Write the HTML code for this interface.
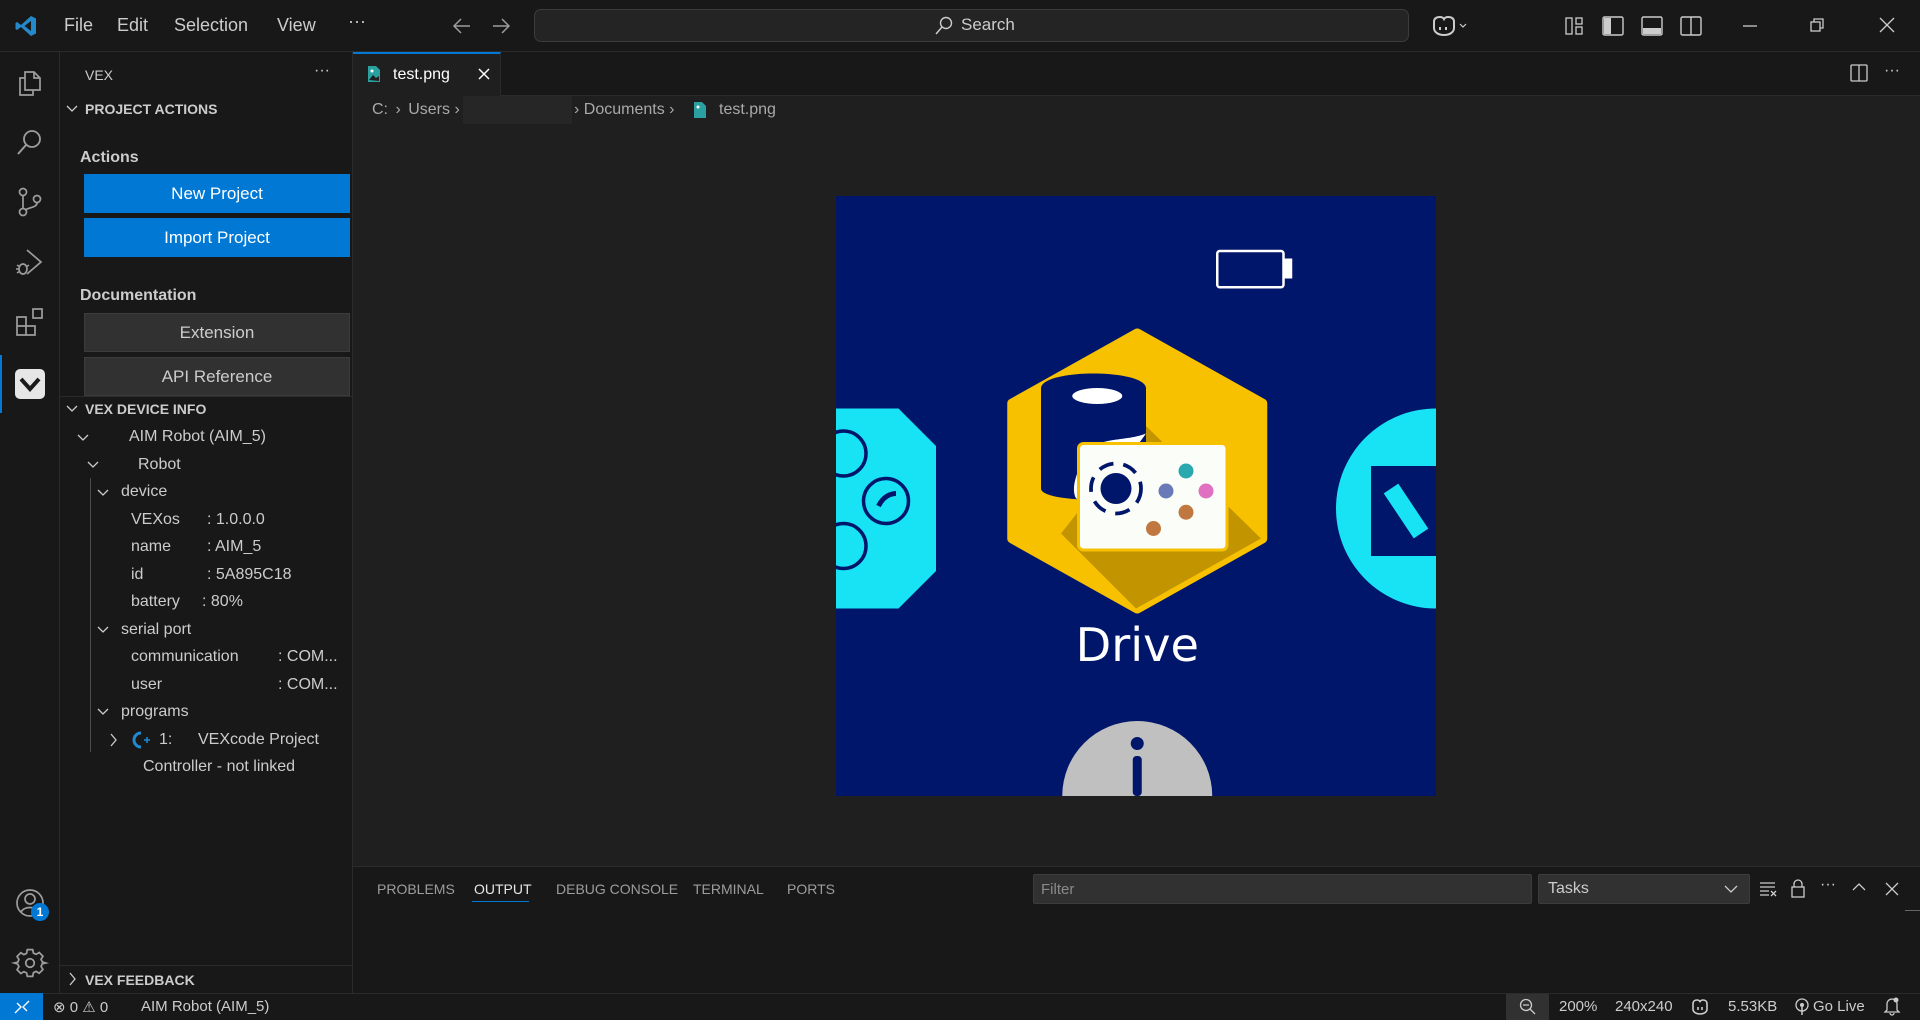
<!DOCTYPE html>
<html><head><meta charset="utf-8"><style>
*{box-sizing:border-box;margin:0;padding:0}
body{width:1920px;height:1020px;overflow:hidden;background:#1f1f1f;font-family:"Liberation Sans",sans-serif;color:#cccccc;position:relative}
.a{position:absolute}
.t{position:absolute;white-space:nowrap;font-size:16px}
svg{position:absolute;overflow:visible}
svg.img{overflow:hidden}
</style></head><body>
<!-- title bar -->
<div class="a" style="left:0;top:0;width:1920px;height:52px;background:#181818;border-bottom:1px solid #2b2b2b"></div>
<svg style="left:14px;top:14px" width="24" height="24" viewBox="0 0 24 24"><path d="M17 2 L22 4.5 V19.5 L17 22 L7 13 L3 16 L1.5 15 V9 L3 8 L7 11 Z M17 7 L10.5 12 L17 17 Z" fill="#2489ca" fill-rule="evenodd"/></svg>
<div class="t" style="left:64px;top:15px;font-size:18px">File</div>
<div class="t" style="left:117px;top:15px;font-size:18px">Edit</div>
<div class="t" style="left:174px;top:15px;font-size:18px">Selection</div>
<div class="t" style="left:277px;top:15px;font-size:18px">View</div>
<div class="t" style="left:348px;top:11px;font-size:18px">···</div>
<svg style="left:452px;top:17px" width="20" height="18"><path d="M18 9H2M9 2L2 9l7 7" stroke="#9d9d9d" stroke-width="1.5" fill="none"/></svg>
<svg style="left:491px;top:17px" width="20" height="18"><path d="M2 9h16M11 2l7 7-7 7" stroke="#9d9d9d" stroke-width="1.5" fill="none"/></svg>
<div class="a" style="left:534px;top:9px;width:875px;height:33px;background:#242424;border:1px solid #3c3c3c;border-radius:7px"></div>
<svg style="left:934px;top:16px" width="20" height="20"><circle cx="12" cy="7" r="5.5" stroke="#ccc" stroke-width="1.4" fill="none"/><path d="M8 11L2 18" stroke="#ccc" stroke-width="1.5"/></svg>
<div class="t" style="left:961px;top:15px;font-size:17px">Search</div>
<svg style="left:1430px;top:14px" width="40" height="24"><path d="M4 8c0-4 3-5 6-5s4 2 4 2 1-2 4-2 6 1 6 5v6c0 4-4 7-10 7S4 18 4 14z" stroke="#ccc" stroke-width="2" fill="none"/><path d="M10 13v3M16 13v3" stroke="#ccc" stroke-width="2"/><path d="M30 10l3 3 3-3" stroke="#ccc" stroke-width="1.2" fill="none"/></svg>
<svg style="left:1565px;top:16px" width="20" height="20"><rect x="1" y="2" width="6" height="16" stroke="#ccc" fill="none" stroke-width="1.3"/><rect x="11" y="2" width="6" height="6" stroke="#ccc" fill="none" stroke-width="1.3"/><rect x="11" y="11" width="6" height="7" stroke="#ccc" fill="none" stroke-width="1.3"/></svg>
<svg style="left:1602px;top:16px" width="22" height="20"><rect x="1" y="1" width="20" height="18" rx="1.5" stroke="#ccc" fill="none" stroke-width="1.4"/><rect x="2" y="2" width="7" height="16" fill="#ccc"/></svg>
<svg style="left:1641px;top:16px" width="22" height="20"><rect x="1" y="1" width="20" height="18" rx="1.5" stroke="#ccc" fill="none" stroke-width="1.4"/><rect x="2" y="12" width="18" height="6" fill="#ccc"/></svg>
<svg style="left:1680px;top:16px" width="22" height="20"><rect x="1" y="1" width="20" height="18" rx="1.5" stroke="#ccc" fill="none" stroke-width="1.4"/><path d="M11 1v18" stroke="#ccc" stroke-width="1.4"/></svg>
<svg style="left:1742px;top:24px" width="16" height="4"><path d="M1 2h14" stroke="#ccc" stroke-width="1.3"/></svg>
<svg style="left:1809px;top:17px" width="16" height="16"><rect x="2" y="5" width="9" height="9" stroke="#ccc" fill="none" stroke-width="1.3"/><path d="M5 5V2h9v9h-3" stroke="#ccc" fill="none" stroke-width="1.3"/></svg>
<svg style="left:1879px;top:17px" width="16" height="16"><path d="M1 1l14 14M15 1L1 15" stroke="#ccc" stroke-width="1.3"/></svg>

<!-- activity bar -->
<div class="a" style="left:0;top:52px;width:60px;height:941px;background:#181818;border-right:1px solid #2b2b2b"></div>
<svg style="left:15px;top:67px" width="30" height="30"><path d="M10 5h9l6 6v12H10z M19 5v6h6" stroke="#9d9d9d" fill="none" stroke-width="1.7"/><path d="M10 11H5v17h13v-5" stroke="#9d9d9d" fill="none" stroke-width="1.7"/></svg>
<svg style="left:15px;top:127px" width="30" height="30"><circle cx="17" cy="12" r="8" stroke="#9d9d9d" fill="none" stroke-width="1.8"/><path d="M11 18L3 27" stroke="#9d9d9d" stroke-width="2"/></svg>
<svg style="left:15px;top:187px" width="30" height="30"><circle cx="8" cy="5" r="3.5" stroke="#9d9d9d" fill="none" stroke-width="1.7"/><circle cx="8" cy="25" r="3.5" stroke="#9d9d9d" fill="none" stroke-width="1.7"/><circle cx="22" cy="12" r="3.5" stroke="#9d9d9d" fill="none" stroke-width="1.7"/><path d="M8 9v12M22 16c0 4-6 4-12 7" stroke="#9d9d9d" fill="none" stroke-width="1.7"/></svg>
<svg style="left:15px;top:247px" width="30" height="30"><path d="M12 3l14 12-14 12" stroke="#9d9d9d" fill="none" stroke-width="1.7"/><ellipse cx="8" cy="22" rx="4" ry="5" stroke="#9d9d9d" fill="none" stroke-width="1.7"/><path d="M2 18l3 2M2 26l3-2M14 18l-3 2M1 22h3" stroke="#9d9d9d" stroke-width="1.5"/></svg>
<svg style="left:15px;top:307px" width="30" height="30"><path d="M2 10h9v9h9v9H2z M2 19h9v9" stroke="#9d9d9d" fill="none" stroke-width="1.7"/><rect x="18" y="2" width="9" height="9" stroke="#9d9d9d" fill="none" stroke-width="1.7"/></svg>
<div class="a" style="left:0;top:355px;width:2px;height:58px;background:#0078d4"></div>
<div class="a" style="left:15px;top:369px;width:30px;height:30px;background:#e6e6e6;border-radius:5px"></div>
<svg style="left:15px;top:369px" width="30" height="30"><path d="M6 10l9 10 9-10" stroke="#1a1a1a" fill="none" stroke-width="4"/></svg>
<svg style="left:14px;top:887px" width="34" height="34"><circle cx="16" cy="16" r="13" stroke="#9d9d9d" fill="none" stroke-width="1.7"/><circle cx="16" cy="12" r="5" stroke="#9d9d9d" fill="none" stroke-width="1.7"/><path d="M7 25c3-6 15-6 18 0" stroke="#9d9d9d" fill="none" stroke-width="1.7"/></svg>
<div class="a" style="left:31px;top:903px;width:18px;height:18px;border-radius:9px;background:#0078d4;color:#fff;font-size:12px;text-align:center;line-height:18px;font-weight:bold">1</div>
<svg style="left:14px;top:947px" width="32" height="32" viewBox="0 0 24 24"><path d="M10 2h4l.6 2.6 2 .9 2.3-1.4 2.8 2.8-1.4 2.3.9 2L23.8 12v0l-2.6.6-.9 2 1.4 2.3-2.8 2.8-2.3-1.4-2 .9L14 22h-4l-.6-2.6-2-.9-2.3 1.4-2.8-2.8 1.4-2.3-.9-2L.2 12v0l2.6-.6.9-2-1.4-2.3 2.8-2.8 2.3 1.4 2-.9z" stroke="#9d9d9d" fill="none" stroke-width="1.3"/><circle cx="12" cy="12" r="3.2" stroke="#9d9d9d" fill="none" stroke-width="1.3"/></svg>

<!-- sidebar -->
<div class="a" style="left:60px;top:52px;width:293px;height:941px;background:#181818;border-right:1px solid #2b2b2b"></div>
<div class="t" style="left:85px;top:67px;font-size:14px">VEX</div>
<div class="t" style="left:314px;top:62px;font-size:16px">···</div>
<svg style="left:66px;top:104px" width="12" height="10"><path d="M1 2l5 5 5-5" stroke="#ccc" fill="none" stroke-width="1.3"/></svg>
<div class="t" style="left:85px;top:101px;font-size:14px;font-weight:bold">PROJECT ACTIONS</div>
<div class="t" style="left:80px;top:149px;font-size:16px;font-weight:bold">Actions</div>
<div class="a" style="left:84px;top:174px;width:266px;height:39px;background:#0078d4;color:#fff;font-size:17px;text-align:center;line-height:39px">New Project</div>
<div class="a" style="left:84px;top:218px;width:266px;height:39px;background:#0078d4;color:#fff;font-size:17px;text-align:center;line-height:39px">Import Project</div>
<div class="t" style="left:80px;top:287px;font-size:16px;font-weight:bold">Documentation</div>
<div class="a" style="left:84px;top:313px;width:266px;height:39px;background:#313131;border:1px solid #3c3c3c;font-size:17px;text-align:center;line-height:37px">Extension</div>
<div class="a" style="left:84px;top:357px;width:266px;height:39px;background:#313131;border:1px solid #3c3c3c;font-size:17px;text-align:center;line-height:37px">API Reference</div>
<div class="a" style="left:60px;top:396px;width:293px;height:1px;background:#2b2b2b"></div>
<svg style="left:66px;top:404px" width="12" height="10"><path d="M1 2l5 5 5-5" stroke="#ccc" fill="none" stroke-width="1.3"/></svg>
<div class="t" style="left:85px;top:401px;font-size:14px;font-weight:bold">VEX DEVICE INFO</div>
<svg style="left:77px;top:433px" width="12" height="10"><path d="M1 2l5 5 5-5" stroke="#ccc" fill="none" stroke-width="1.3"/></svg>
<div class="t" style="left:129px;top:428px">AIM Robot (AIM_5)</div>
<svg style="left:87px;top:460px" width="12" height="10"><path d="M1 2l5 5 5-5" stroke="#ccc" fill="none" stroke-width="1.3"/></svg>
<div class="t" style="left:138px;top:456px">Robot</div>
<div class="a" style="left:90px;top:478px;width:1px;height:274px;background:#4a4a4a"></div>
<svg style="left:97px;top:488px" width="12" height="10"><path d="M1 2l5 5 5-5" stroke="#ccc" fill="none" stroke-width="1.3"/></svg>
<div class="t" style="left:121px;top:483px">device</div>
<div class="t" style="left:131px;top:511px">VEXos</div><div class="t" style="left:207px;top:511px">: 1.0.0.0</div>
<div class="t" style="left:131px;top:538px">name</div><div class="t" style="left:207px;top:538px">: AIM_5</div>
<div class="t" style="left:131px;top:566px">id</div><div class="t" style="left:207px;top:566px">: 5A895C18</div>
<div class="t" style="left:131px;top:593px">battery</div><div class="t" style="left:202px;top:593px">: 80%</div>
<svg style="left:97px;top:625px" width="12" height="10"><path d="M1 2l5 5 5-5" stroke="#ccc" fill="none" stroke-width="1.3"/></svg>
<div class="t" style="left:121px;top:621px">serial port</div>
<div class="t" style="left:131px;top:648px">communication</div><div class="t" style="left:278px;top:648px">: COM...</div>
<div class="t" style="left:131px;top:676px">user</div><div class="t" style="left:278px;top:676px">: COM...</div>
<svg style="left:97px;top:707px" width="12" height="10"><path d="M1 2l5 5 5-5" stroke="#ccc" fill="none" stroke-width="1.3"/></svg>
<div class="t" style="left:121px;top:703px">programs</div>
<svg style="left:109px;top:733px" width="10" height="14"><path d="M2 1l5 6-5 6" stroke="#ccc" fill="none" stroke-width="1.3"/></svg>
<svg style="left:132px;top:731px" width="20" height="18"><path d="M9 2a7 7 0 1 0 0 14" stroke="#1f8ad2" fill="none" stroke-width="3"/><path d="M12 9h6M15 6v6" stroke="#1f8ad2" stroke-width="1.5"/></svg>
<div class="t" style="left:159px;top:731px">1:</div><div class="t" style="left:198px;top:731px">VEXcode Project</div>
<div class="t" style="left:143px;top:758px">Controller - not linked</div>
<div class="a" style="left:60px;top:965px;width:293px;height:1px;background:#2b2b2b"></div>
<svg style="left:68px;top:972px" width="10" height="14"><path d="M2 1l5 6-5 6" stroke="#ccc" fill="none" stroke-width="1.3"/></svg>
<div class="t" style="left:85px;top:972px;font-size:14px;font-weight:bold">VEX FEEDBACK</div>

<!-- tabs -->
<div class="a" style="left:353px;top:52px;width:1567px;height:44px;background:#181818;border-bottom:1px solid #2b2b2b"></div>
<div class="a" style="left:353px;top:52px;width:148px;height:45px;background:#1f1f1f;border-top:2px solid #0078d4;border-right:1px solid #2b2b2b"></div>
<svg style="left:367px;top:65px" width="14" height="18"><path d="M1 1h8l4 4v12H1z" fill="#2aa0a0"/><circle cx="5" cy="6" r="1.5" fill="#fff"/><path d="M2 15l4-5 3 3 3-2v5z" fill="#1f1f1f"/></svg>
<div class="t" style="left:393px;top:66px;font-size:16px;color:#fff">test.png</div>
<svg style="left:477px;top:67px" width="14" height="14"><path d="M2 2l10 10M12 2L2 12" stroke="#fff" stroke-width="1.5"/></svg>
<svg style="left:1850px;top:64px" width="18" height="18"><rect x="1" y="1" width="16" height="16" rx="1" stroke="#ccc" fill="none" stroke-width="1.3"/><path d="M9 1v16" stroke="#ccc" stroke-width="1.3"/></svg>
<div class="t" style="left:1884px;top:62px;font-size:16px">···</div>
<!-- breadcrumb -->
<div class="t" style="left:372px;top:101px;font-size:16px;color:#a9a9a9">C: <span style="margin:0 3px">›</span> Users <span>›</span></div>
<div class="a" style="left:463px;top:96px;width:109px;height:28px;background:#262626"></div>
<div class="t" style="left:574px;top:101px;font-size:16px;color:#a9a9a9">› Documents ›</div>
<svg style="left:693px;top:101px" width="14" height="18"><path d="M1 1h8l4 4v12H1z" fill="#2aa0a0"/><circle cx="5" cy="6" r="1.5" fill="#fff"/></svg>
<div class="t" style="left:719px;top:101px;font-size:16px;color:#a9a9a9">test.png</div>

<!-- image -->
<svg class="img" style="left:836px;top:196px" width="600" height="600" viewBox="0 0 240 240">
<rect width="240" height="240" fill="#00166b"/>
<rect x="152.5" y="22" width="26.5" height="14.5" rx="1" stroke="#fff" stroke-width="1" fill="none"/>
<path d="M179 25h3.5v8H179z" fill="#fff"/>
<path d="M0 85h25l15 15v50l-15 15H0z" fill="#17e3f4"/>
<g stroke="#00166b" stroke-width="1.4" fill="none"><circle cx="3" cy="103" r="9"/><circle cx="20" cy="122" r="9"/><circle cx="3" cy="140" r="9"/></g>
<path d="M17 124c2-4 5-5 7-5" stroke="#00166b" stroke-width="2" fill="none"/>
<circle cx="240" cy="125" r="40" fill="#17e3f4"/>
<path d="M214 108h26v36h-26z" fill="#00166b"/>
<path d="M222 117l12 18" stroke="#17e3f4" stroke-width="7"/>
<path d="M120.5 55l50 28v54l-50 28-50-28v-54z" fill="#f8c100" stroke="#f8c100" stroke-width="4" stroke-linejoin="round"/>
<path d="M124 92l46 45v0l-50 28-30-30z" fill="#c29500"/>
<path d="M82 77c0-8 42-8 42 0v40c0 6-42 6-42 0z" fill="#00166b"/>
<ellipse cx="104.5" cy="80" rx="10" ry="3.2" fill="#fff"/>
<path d="M124 95c-10 4-22 0-26 12-2 5-4 10-2 14l8 2z" fill="#fff"/>
<rect x="97" y="99" width="59.4" height="42.6" rx="2" fill="#fafdf8" stroke="#f8c100" stroke-width="1.2"/>
<circle cx="112" cy="117" r="6.2" fill="#00166b"/>
<circle cx="112" cy="117" r="10" stroke="#00166b" stroke-width="1.5" fill="none" stroke-dasharray="6 4"/>
<circle cx="140" cy="110" r="3" fill="#2aa8b0"/><circle cx="132" cy="118" r="3" fill="#6a7ab8"/><circle cx="148" cy="118" r="3" fill="#e070c0"/><circle cx="140" cy="126.5" r="3" fill="#c07840"/><circle cx="127" cy="133" r="3" fill="#c07840"/>
<text x="120.5" y="186" fill="#fff" font-family="DejaVu Sans,sans-serif" font-size="18.5" text-anchor="middle">Drive</text>
<circle cx="120.5" cy="240" r="30" fill="#c0c0c0"/>
<circle cx="120.5" cy="219" r="2.6" fill="#00166b"/>
<rect x="118.7" y="224" width="3.6" height="16" rx="1.5" fill="#00166b"/>
</svg>

<!-- panel -->
<div class="a" style="left:353px;top:866px;width:1567px;height:127px;background:#181818;border-top:1px solid #2b2b2b"></div>
<div class="t" style="left:377px;top:881px;font-size:14px;color:#9d9d9d">PROBLEMS</div>
<div class="t" style="left:474px;top:881px;font-size:14px;color:#e7e7e7">OUTPUT</div>
<div class="a" style="left:472px;top:901px;width:57px;height:1px;background:#0078d4"></div>
<div class="t" style="left:556px;top:881px;font-size:14px;color:#9d9d9d">DEBUG CONSOLE</div>
<div class="t" style="left:693px;top:881px;font-size:14px;color:#9d9d9d">TERMINAL</div>
<div class="t" style="left:787px;top:881px;font-size:14px;color:#9d9d9d">PORTS</div>
<div class="a" style="left:1033px;top:874px;width:499px;height:30px;background:#313131;border:1px solid #3c3c3c;border-radius:2px"></div>
<div class="t" style="left:1041px;top:881px;font-size:15px;color:#8a8a8a">Filter</div>
<div class="a" style="left:1538px;top:874px;width:212px;height:30px;background:#313131;border:1px solid #3c3c3c;border-radius:2px"></div>
<div class="t" style="left:1548px;top:880px;font-size:16px">Tasks</div>
<svg style="left:1724px;top:884px" width="14" height="10"><path d="M1 2l6 6 6-6" stroke="#ccc" fill="none" stroke-width="1.3"/></svg>
<svg style="left:1759px;top:880px" width="18" height="18"><path d="M1 3h15M1 7h15M1 11h9M1 15h9M12 11l5 5M17 11l-5 5" stroke="#ccc" stroke-width="1.3"/></svg>
<svg style="left:1790px;top:878px" width="16" height="20"><rect x="2" y="9" width="12" height="10" stroke="#ccc" fill="none" stroke-width="1.3"/><path d="M4 9V6a4 4 0 0 1 8 0v3" stroke="#ccc" fill="none" stroke-width="1.3"/></svg>
<div class="t" style="left:1820px;top:876px;font-size:16px">···</div>
<svg style="left:1852px;top:882px" width="14" height="10"><path d="M1 8l6-6 6 6" stroke="#ccc" fill="none" stroke-width="1.3"/></svg>
<svg style="left:1885px;top:882px" width="14" height="14"><path d="M1 1l12 12M13 1L1 13" stroke="#ccc" stroke-width="1.3"/></svg>
<div class="a" style="left:1905px;top:910px;width:15px;height:1px;background:#666"></div>

<!-- status -->
<div class="a" style="left:0;top:993px;width:1920px;height:27px;background:#181818;border-top:1px solid #2b2b2b"></div>
<div class="a" style="left:0;top:993px;width:43px;height:27px;background:#0078d4"></div>
<svg style="left:13px;top:999px" width="18" height="16"><path d="M2 14l6-6-4-4M16 2l-6 6 4 4" stroke="#fff" fill="none" stroke-width="1.4"/></svg>
<div class="t" style="left:53px;top:998px;font-size:15px">⊗ 0 ⚠ 0</div>
<div class="t" style="left:141px;top:998px;font-size:15px">AIM Robot (AIM_5)</div>
<div class="a" style="left:1506px;top:994px;width:43px;height:26px;background:#313131"></div>
<svg style="left:1519px;top:998px" width="18" height="18"><circle cx="7" cy="7" r="5.5" stroke="#ccc" fill="none" stroke-width="1.3"/><path d="M4 7h6M11 11l5 5" stroke="#ccc" stroke-width="1.3"/></svg>
<div class="t" style="left:1559px;top:998px;font-size:15px">200%</div>
<div class="t" style="left:1615px;top:998px;font-size:15px">240x240</div>
<svg style="left:1691px;top:998px" width="20" height="18"><path d="M2 6c0-3 2-4 4-4s3 1.5 3 1.5S10 2 12 2s4 1 4 4v5c0 3-3 5-7 5s-7-2-7-5z" stroke="#ccc" stroke-width="1.6" fill="none"/><path d="M7 9v3M11 9v3" stroke="#ccc" stroke-width="1.6"/></svg>
<div class="t" style="left:1728px;top:998px;font-size:15px">5.53KB</div>
<svg style="left:1794px;top:998px" width="16" height="18"><circle cx="8" cy="7" r="6" stroke="#ccc" fill="none" stroke-width="1.3"/><circle cx="8" cy="7" r="2" fill="#ccc"/><path d="M8 9v8" stroke="#ccc" stroke-width="1.5"/></svg>
<div class="t" style="left:1813px;top:998px;font-size:15px">Go Live</div>
<svg style="left:1884px;top:997px" width="16" height="18"><path d="M3 13V7a5 5 0 0 1 10 0v6l2 2H1z M6 16a2 2 0 0 0 4 0" stroke="#ccc" fill="none" stroke-width="1.3"/><circle cx="12" cy="3" r="2.5" fill="#ccc"/></svg>
</body></html>
